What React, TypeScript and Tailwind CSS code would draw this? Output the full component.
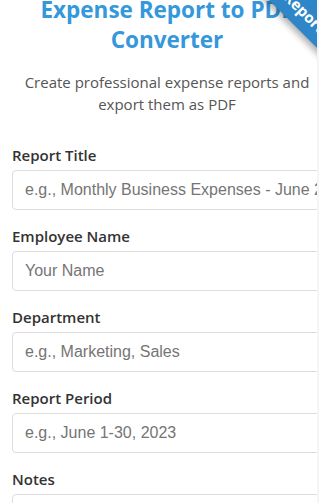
import React from "react";

const fields = [
  { label: "Report Title", placeholder: "e.g., Monthly Business Expenses - June 2023" },
  { label: "Employee Name", placeholder: "Your Name" },
  { label: "Department", placeholder: "e.g., Marketing, Sales" },
  { label: "Report Period", placeholder: "e.g., June 1-30, 2023" },
];

export default function App() {
  return (
    <main className="flex min-h-screen bg-[#f4f5f7]">
      <section className="relative w-[317px] min-h-screen bg-white overflow-hidden font-['Open_Sans',sans-serif]">
        <div className="w-[334px] px-3">
          {/* Header */}
          <header className="text-center">
            <h1 className="mt-[-5px] text-[22.5px] leading-[30px] font-bold text-[#3498db]">
              Expense Report to PDF Converter
            </h1>
            <p className="mt-[17px] text-[15px] leading-[21.5px] text-[#555]">
              Create professional expense reports and export them as PDF
            </p>
          </header>

          {/* Form */}
          <form className="mt-[30px]">
            {fields.map((f) => (
              <div key={f.label} className="mb-4">
                <label className="block mb-1 text-[15px] leading-[21px] font-semibold text-[#333]">
                  {f.label}
                </label>
                <input
                  type="text"
                  placeholder={f.placeholder}
                  className="w-full h-10 pl-3 pr-0 border border-[#ddd] rounded-[4px] text-[16px] font-['Liberation_Sans',Arial,sans-serif] text-[#333] placeholder:text-[#757575] outline-none"
                />
              </div>
            ))}
            <div>
              <label className="block mb-1 text-[15px] leading-[21px] font-semibold text-[#333]">
                Notes
              </label>
              <textarea
                rows={4}
                placeholder="Additional notes..."
                className="w-full px-3 py-2 border border-[#ddd] rounded-[4px] text-[16px] font-['Liberation_Sans',Arial,sans-serif] outline-none resize-none"
              />
            </div>
          </form>
        </div>

        {/* Corner ribbon */}
        <div className="absolute top-[-5px] right-[-63px] w-[150px] h-[34px] rotate-45 bg-[#2e86c8] text-white text-[15px] leading-[34px] font-bold text-center shadow-[0_4px_6px_rgba(0,0,0,0.3)]">
          Report
        </div>
      </section>
    </main>
  );
}
